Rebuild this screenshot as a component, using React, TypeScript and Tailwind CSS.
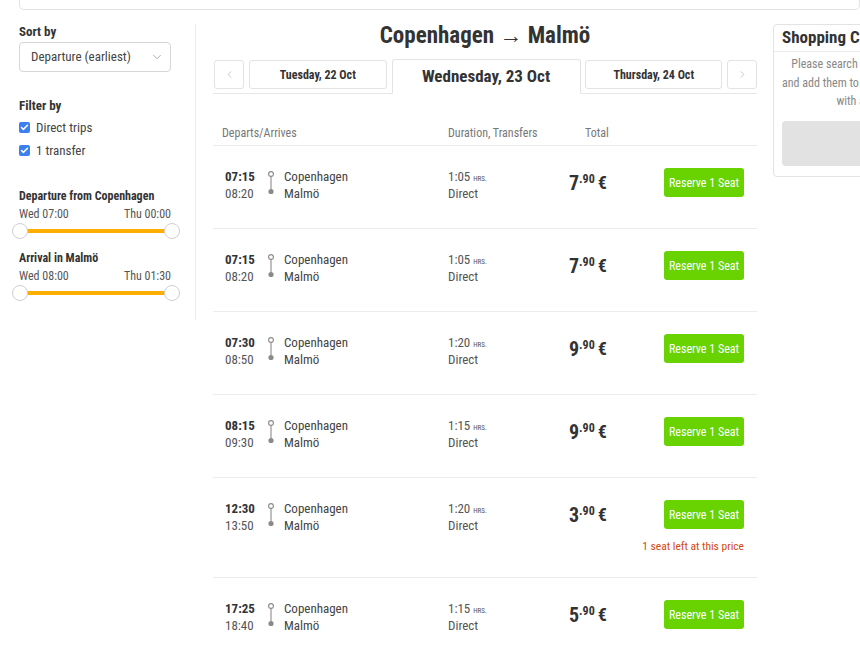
import { ChevronDown, ChevronLeft, ChevronRight, Check } from "lucide-react";

const trips = [
	{ dep: "07:15", arr: "08:20", dur: "1:05", price: "7" },
	{ dep: "07:15", arr: "08:20", dur: "1:05", price: "7" },
	{ dep: "07:30", arr: "08:50", dur: "1:20", price: "9" },
	{ dep: "08:15", arr: "09:30", dur: "1:15", price: "9" },
	{ dep: "12:30", arr: "13:50", dur: "1:20", price: "3", warn: true },
	{ dep: "17:25", arr: "18:40", dur: "1:15", price: "5" },
];

function CheckItem({ label }: { label: string }) {
	return (
		<label className="flex items-center gap-[6px] h-[23px] text-[13px] text-[#444]">
			<span className="w-[11px] h-[11px] rounded-[2px] bg-[#3b7ff0] flex items-center justify-center">
				<Check className="w-[9px] h-[9px] text-white" strokeWidth={4} />
			</span>
			{label}
		</label>
	);
}

function Range({ title, from, to }: { title: string; from: string; to: string }) {
	return (
		<div>
			<div className="text-[12px] font-bold text-[#333] leading-[16px]">{title}</div>
			<div className="flex justify-between text-[12px] text-[#555] leading-[20px]">
				<span>{from}</span>
				<span>{to}</span>
			</div>
			<div className="relative h-[16px] mt-[-1px]">
				<div className="absolute left-[1px] right-[1px] top-[6px] h-[4px] bg-[#ffad00]" />
				<span className="absolute left-[-7px] top-0 w-[16px] h-[16px] rounded-full bg-white border border-[#cfcfcf]" />
				<span className="absolute right-[-9px] top-0 w-[16px] h-[16px] rounded-full bg-white border border-[#cfcfcf]" />
			</div>
		</div>
	);
}

function RouteIcon() {
	return (
		<svg width="8" height="24" viewBox="0 0 8 24" className="mt-[3px] shrink-0">
			<circle cx="4" cy="3" r="2.4" fill="none" stroke="#8a8a8a" strokeWidth="1.1" />
			<line x1="4" y1="5.4" x2="4" y2="19" stroke="#8a8a8a" strokeWidth="1.1" />
			<circle cx="4" cy="20.5" r="2.6" fill="#8a8a8a" />
		</svg>
	);
}

export default function App() {
	return (
		<div className="w-[860px] h-[650px] overflow-hidden bg-white text-[#333] font-['Roboto_Condensed','Roboto',sans-serif]">
			{/* search box edge */}
			<div className="ml-[19px] h-[10px] border border-t-0 border-[#e3e3e3] rounded-b-[5px]" />

			<div className="flex mt-[14px]">
				{/* Sidebar */}
				<aside className="ml-[19px] w-[177px] pr-[24px] border-r border-[#ececec] h-[296px] shrink-0">
					<div className="text-[13px] font-bold leading-[16px]">Sort by</div>
					<div className="mt-[2px] h-[30px] border border-[#d6d6d6] rounded-[4px] flex items-center justify-between pl-[11px] pr-[6px] text-[13px] text-[#444]">
						Departure (earliest)
						<ChevronDown className="w-[14px] h-[14px] text-[#999]" strokeWidth={1.3} />
					</div>

					<div className="mt-[26px] text-[13px] font-bold leading-[16px]">Filter by</div>
					<div className="mt-[2px]">
						<CheckItem label="Direct trips" />
						<CheckItem label="1 transfer" />
					</div>

					<div className="mt-[26px] flex flex-col gap-[11px]">
						<Range title="Departure from Copenhagen" from="Wed 07:00" to="Thu 00:00" />
						<Range title="Arrival in Malmö" from="Wed 08:00" to="Thu 01:30" />
					</div>
				</aside>

				{/* Results */}
				<main className="ml-[17px] w-[544px] shrink-0">
					<h1 className="text-[23px] font-bold leading-[24px] text-center text-[#333]">Copenhagen → Malmö</h1>

					<div className="mt-[11px] flex items-end justify-between border-b border-[#e6e6e6] pl-[1px]">
						<button className="w-[30px] h-[29px] mb-[4px] border border-[#e3e3e3] rounded-[3px] flex items-center justify-center text-[#aaa]">
							<ChevronLeft className="w-[11px] h-[11px]" strokeWidth={1.5} />
						</button>
						<button className="w-[138px] h-[29px] mb-[4px] border border-[#e3e3e3] rounded-[3px] text-[12px] font-bold text-[#333]">
							Tuesday, 22 Oct
						</button>
						<button className="w-[189px] h-[35px] -mb-px border border-[#e3e3e3] border-b-white bg-white rounded-t-[3px] text-[17px] font-bold text-[#333]">
							Wednesday, 23 Oct
						</button>
						<button className="w-[137px] h-[29px] mb-[4px] border border-[#e3e3e3] rounded-[3px] text-[12px] font-bold text-[#333]">
							Thursday, 24 Oct
						</button>
						<button className="w-[30px] h-[29px] mb-[4px] border border-[#e3e3e3] rounded-[3px] flex items-center justify-center text-[#aaa]">
							<ChevronRight className="w-[11px] h-[11px]" strokeWidth={1.5} />
						</button>
					</div>

					<div className="mt-[30px] flex h-[22px] items-start text-[12px] text-[#777] border-b border-[#ececec]">
						<span className="pl-[9px] w-[235px]">Departs/Arrives</span>
						<span className="w-[137px]">Duration, Transfers</span>
						<span>Total</span>
					</div>

					{trips.map((t, i) => (
						<div
							key={i}
							className={`flex items-start border-b border-[#ececec] pt-[22px] ${t.warn ? "h-[100px]" : "h-[83px]"}`}
						>
							<div className="pl-[12px] w-[54px] shrink-0 text-[13px] leading-[17px]">
								<div className="font-bold">{t.dep}</div>
								<div className="text-[#555]">{t.arr}</div>
							</div>
							<RouteIcon />
							<div className="ml-[9px] w-[164px] shrink-0 text-[13px] leading-[17px] text-[#444]">
								<div>Copenhagen</div>
								<div>Malmö</div>
							</div>
							<div className="w-[121px] shrink-0 text-[13px] leading-[17px] text-[#555]">
								<div className="h-[17px]">
									{t.dur} <span className="text-[7px] leading-none uppercase">hrs.</span>
								</div>
								<div>Direct</div>
							</div>
							<div className="w-[80px] shrink-0 h-[29px] flex items-center font-bold text-[#333]">
								<span className="text-[20px] leading-none">{t.price}</span>
								<span className="text-[12px] leading-none self-start mt-[5px]">.90</span>
								<span className="text-[18px] leading-none ml-[3px]">€</span>
							</div>
							<div className="ml-auto mr-[13px] w-[80px] shrink-0 flex flex-col items-end">
								<button className="w-[80px] h-[29px] rounded-[3px] bg-[#68d300] text-white text-[12px]">
									Reserve 1 Seat
								</button>
								{t.warn && (
									<div className="mt-[10px] text-[11.5px] leading-[14px] text-[#d4470c] whitespace-nowrap">
										1 seat left at this price
									</div>
								)}
							</div>
						</div>
					))}
				</main>

				{/* Shopping cart */}
				<aside className="ml-[16px] w-[180px] h-[153px] shrink-0 border border-[#e3e3e3] rounded-[4px] flex flex-col">
					<div className="px-[8px] h-[27px] flex items-center border-b border-[#ececec] text-[17px] font-bold whitespace-nowrap">
						Shopping Cart
					</div>
					<p className="mt-[3px] px-[8px] text-center text-[12px] leading-[18.5px] text-[#888] whitespace-nowrap">
						Please search for connections
						<br />
						and add them to the shopping cart
						<br />
						with a click
					</p>
					<div className="mx-[8px] mt-[10px] h-[45px] rounded-[4px] bg-[#e2e2e2]" />
				</aside>
			</div>
		</div>
	);
}
